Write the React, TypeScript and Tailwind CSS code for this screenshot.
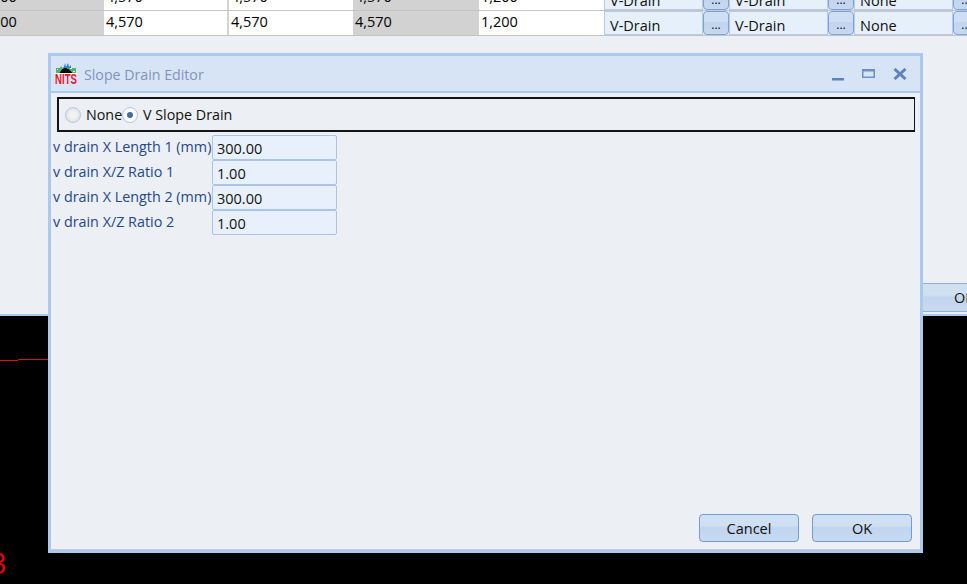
function Cell({ text, gray, line, shift }: { text: string; gray?: boolean; line?: "one" | "two"; shift?: boolean }) {
  return (
    <div
      className={`h-[24px] flex items-center text-[14.5px] text-black overflow-hidden whitespace-nowrap ${gray ? "bg-[#d2d2d2]" : "bg-white"} ${line === "two" ? "border-r-2 border-[#d4d4d4]" : ""} ${line === "one" ? "border-r border-[#d4d4d4]" : ""}`}
    >
      <span className={`pb-[2px] ${shift ? "-ml-[20px]" : "ml-[2px]"}`}>{text}</span>
    </div>
  );
}

function DrainCell({ text }: { text: string }) {
  return (
    <div className="h-[24px] pl-[5px] bg-[#e6f0fb] border border-[#b9cbe2] text-[14.5px] text-[#111] leading-[27px] overflow-hidden">
      {text}
    </div>
  );
}

function DotButton() {
  return (
    <div className="h-[24px] rounded-[4px] border border-[#7ba3dc] bg-[linear-gradient(#cfdff3_0%,#cfdff3_45%,#c2d5ee_45%,#c6d8f0_100%)] flex items-end justify-center text-[12px] leading-[18px] text-[#111]">
      ...
    </div>
  );
}

function TableRow({ top }: { top?: boolean }) {
  const value = "4,570";
  return (
    <div className={`grid grid-cols-[104px_125px_124px_126px_125px_99px_26px_99px_26px_99px_26px_14px] ${top ? "-mt-[14px]" : ""} border-b border-[#c4c4c4]`}>
      <Cell gray shift text="1,200" />
      <Cell line="two" text={value} />
      <Cell text={value} />
      <Cell gray line="one" text={value} />
      <Cell text="1,200" />
      <DrainCell text="V-Drain" />
      <DotButton />
      <DrainCell text="V-Drain" />
      <DotButton />
      <DrainCell text="None" />
      <DotButton />
      <div className="bg-[#eceff4]" />
    </div>
  );
}

function Radio({ checked }: { checked?: boolean }) {
  return (
    <span
      className={`w-[16px] h-[16px] rounded-full border border-[#b5c9e3] flex items-center justify-center shrink-0 ${checked ? "bg-[radial-gradient(circle,#ffffff_55%,#e6eaf0_100%)]" : "bg-[radial-gradient(circle,#f2f2f2_30%,#d4d7dc_100%)]"}`}
    >
      {checked && <span className="w-[6px] h-[6px] rounded-full bg-[#4a6a9c]" />}
    </span>
  );
}

function Field({ label, value }: { label: string; value: string }) {
  return (
    <div className="flex items-stretch h-[25px]">
      <span className="w-[159px] shrink-0 whitespace-nowrap text-[14.35px] leading-[23px] text-[#24488a]">{label}</span>
      <span className="w-[125px] border border-[#a9c4e6] rounded-[2px] bg-[#e7f0fb] pl-[4px] text-[14.5px] leading-[26px] text-[#111]">
        {value}
      </span>
    </div>
  );
}

function DialogButton({ label }: { label: string }) {
  return (
    <button className="w-[100px] h-[28px] pt-[1px] rounded-[4px] border border-[#6f9bd6] bg-[linear-gradient(#cfe0f3_0%,#cfe0f3_40%,#c1d5ef_50%,#c8daf1_100%)] text-[14.5px] text-[#111]">
      {label}
    </button>
  );
}

function Logo() {
  return (
    <svg width="22" height="22" viewBox="0 0 22 22" className="shrink-0">
      <path d="M5 6l1-3 1 2 2-1 1-4 1 4 2-4 1 4 2-2 0 4z" fill="#2f7fc4" />
      <rect x="1" y="5" width="20" height="6" fill="#4fb56a" />
      <rect x="2" y="6" width="1" height="1" fill="#fff" />
      <rect x="18" y="8" width="2" height="1" fill="#fff" />
      <rect x="15" y="5" width="2" height="1" fill="#fff" />
      <path d="M4 11c2-4 4-6 6-6s6 2 8 6z" fill="#000" />
      <rect x="0" y="10" width="22" height="1" fill="#fff" />
      <text
        x="0"
        y="21"
        textLength="22"
        lengthAdjust="spacingAndGlyphs"
        fontSize="14"
        fontWeight="700"
        fill="#e8192c"
        fontFamily='"Liberation Sans", sans-serif'
      >
        NITS
      </text>
    </svg>
  );
}

export default function App() {
  return (
    <div
      className="relative w-[967px] h-[584px] overflow-hidden bg-black flex flex-col"
      style={{ fontFamily: '"Open Sans", "Noto Sans", sans-serif' }}
    >
      <div className="bg-[#eceff4] h-[316px] border-b-2 border-[#abc8ef] flex flex-col shrink-0">
        <TableRow top />
        <TableRow />
        <div className="flex-1 flex flex-col justify-end items-end pb-[2px]">
          <div className="w-[45px] h-[29px] border-y border-[#8db0e0] bg-[linear-gradient(#cfe0f3_0%,#cfe0f3_40%,#c1d5ef_50%,#c8daf1_100%)] pl-[32px] text-[14.5px] leading-[27px] text-[#111] overflow-hidden whitespace-nowrap">
            OK
          </div>
        </div>
      </div>

      <div className="relative flex-1">
        <div className="absolute left-0 top-[44px] w-[18px] h-px bg-[#e01010]" />
        <div className="absolute left-[18px] top-[43px] w-[32px] h-px bg-[#e01010]" />
        <span className="absolute left-[-10px] top-[232px] text-[29px] leading-[30px] text-[#f00000]">3</span>
      </div>

      <div className="absolute left-[48px] top-[53px] w-[875px] h-[500px] border-[3px] border-[#abc8ef] bg-[#eceff4] flex flex-col">
        <div className="h-[37px] shrink-0 bg-[#d7e4f6] border-b-2 border-[#abc8ef] flex items-center pl-[4px] pr-[13px]">
          <Logo />
          <span className="ml-[7px] pt-[2px] text-[14.2px] text-[#8393bb]">Slope Drain Editor</span>
          <div className="ml-auto flex items-center gap-[18px]">
            <svg width="12" height="14" viewBox="0 0 12 14"><rect x="0" y="11" width="12" height="2.5" fill="#5b83bd" /></svg>
            <svg width="13" height="10" viewBox="0 0 13 10"><rect x="0.75" y="0.75" width="11.5" height="7.5" fill="none" stroke="#6c90c4" strokeWidth="1.5" /><rect x="0" y="0" width="13" height="2.5" fill="#6c90c4" /></svg>
            <svg width="14" height="12" viewBox="0 0 14 12" className="mt-[1px]"><path d="M1.5 1l11 10M12.5 1l-11 10" stroke="#5b83bd" strokeWidth="3" /></svg>
          </div>
        </div>

        <div className="flex-1 flex flex-col pt-[4px] pb-[7px] pl-[2px] pr-[5px] border-b border-[#c6ccd6]">
          <div className="ml-[4px] h-[35px] border-2 border-r border-[#141414] flex items-center pl-[6px] text-[14.3px] text-[#111]">
            <Radio />
            <span className="ml-[5px] w-[36px]">None</span>
            <Radio checked />
            <span className="ml-[5px]">V Slope Drain</span>
          </div>
          <div className="mt-[3px] flex flex-col">
            <Field label="v drain X Length 1 (mm)" value="300.00" />
            <Field label="v drain X/Z Ratio 1" value="1.00" />
            <Field label="v drain X Length 2 (mm)" value="300.00" />
            <Field label="v drain X/Z Ratio 2" value="1.00" />
          </div>
          <div className="mt-auto flex justify-end gap-[13px] pr-[3px]">
            <DialogButton label="Cancel" />
            <DialogButton label="OK" />
          </div>
        </div>
      </div>
    </div>
  );
}
